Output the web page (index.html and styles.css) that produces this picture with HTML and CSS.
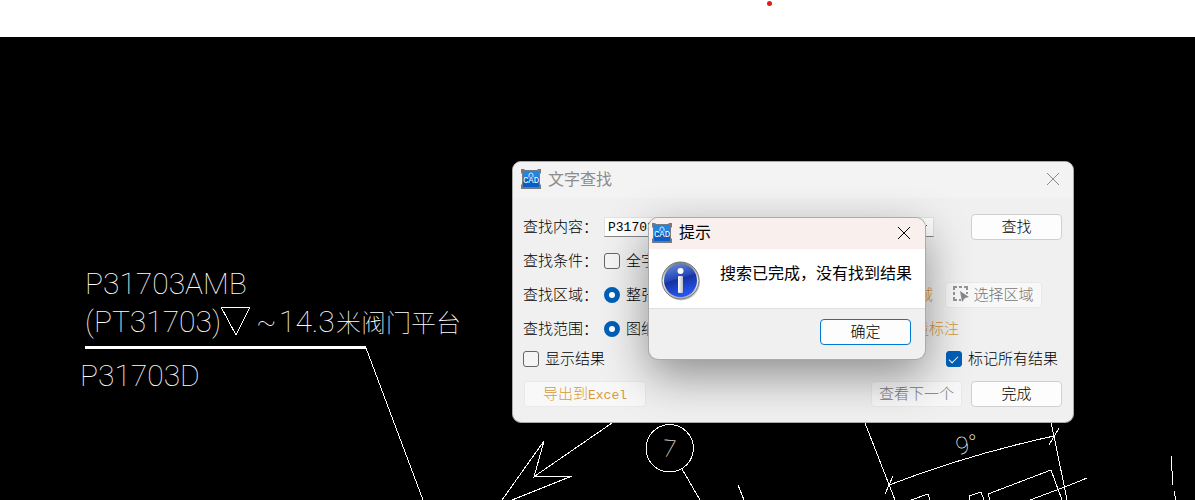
FILE: index.html
```html
<!DOCTYPE html>
<html lang="zh-CN">
<head>
    <meta charset="UTF-8">
    <meta name="viewport" content="width=device-width, initial-scale=1.0">
    <title>文字查找</title>
    <link rel="stylesheet" href="styles.css">
</head>
<body>

    <div class="top-strip">
        <span class="red-dot"></span>
    </div>

    <main class="canvas">

        <!-- CAD drawing -->
        <svg class="drawing">
            <g class="cad-text">
                <text x="85" y="257">P31703AMB</text>
                <text x="85" y="295">(PT31703)</text>
                <text x="256" y="295">~</text>
                <text x="279" y="295">14.3</text>
                <text class="cad-cn" x="336" y="295">米阀门平台</text>
                <text x="80" y="349">P31703D</text>
                <text class="cad-small" x="663" y="420" transform="rotate(5 669 411)">7</text>
                <text class="cad-small" x="956" y="417" transform="rotate(-12 962 409)">9°</text>
            </g>
            <g class="cad-lines">
                <path d="M221 270H250L236 298Z" />
                <path class="thick" d="M85 310.5H366" />
                <path d="M366 311L423 463" />
                <path d="M612 386L535 439M502 463L544 404L534 440L572 439L512 463" />
                <circle cx="669.7" cy="411.3" r="23.7" />
                <path d="M682 432L700 463M738 448L744 463" />
                <path d="M865 386L895 463M1051 386L1054 399L1067 463" />
                <path d="M889 448Q970 417 1054 399" />
                <path d="M893 439L885 457M1059 391L1049 408" />
                <path d="M911 463L928 457L930 463M970 463L969 459L981 455L984 463" />
                <path d="M990 463L988 457L1051 433L1062 463" />
                <path d="M1030 463L1070 448L1087 441" />
                <path d="M1171 419L1173 448M1174 454L1176 463" />
            </g>
        </svg>

        <!-- Search window -->
        <section class="window search-window">
            <header class="title-bar">
                <svg class="app-icon" viewBox="0 0 20 20">
                    <path d="M0 0H3L4 1H16L17 0H20V4L19 5V15L20 16V20H0V16L1 15V5L0 4Z" fill="#747a83" />
                    <rect x="2" y="2" width="16" height="16" fill="#075fc5" />
                    <path d="M2 2H18V8Q10 12 2 9Z" fill="#2385df" />
                    <path d="M8 8V6Q8 4 10 4Q12 4 12 6V8" fill="none" stroke="#d4e8f6" />
                    <text x="10" y="14" text-anchor="middle">CAD</text>
                </svg>
                <h1>文字查找</h1>
                <button class="close" aria-label="关闭">
                    <svg viewBox="0 0 12 12"><path d="M0 0L12 12M12 0L0 12" /></svg>
                </button>
            </header>

            <form class="search-form">
                <div class="row">
                    <label class="caption" for="keyword">查找内容：</label>
                    <div class="combo">
                        <input type="text" id="keyword" value="P31703">
                        <button type="button" aria-label="展开">
                            <svg viewBox="0 0 8 5"><path d="M0 0L4 4L8 0" /></svg>
                        </button>
                    </div>
                    <button type="button" class="btn push">查找</button>
                </div>
                <div class="row">
                    <span class="caption">查找条件：</span>
                    <label class="option"><input type="checkbox">全字</label>
                </div>
                <div class="row">
                    <span class="caption">查找区域：</span>
                    <label class="option"><input type="radio" name="area" checked>整张</label>
                    <span class="orange push">区域</span>
                    <button type="button" class="btn pick" disabled>
                        <svg viewBox="0 0 16 16">
                            <path d="M1 4V1H4M6 1H9M11 1H14V4M14 6V8M1 6V9M1 11V14H4M6 14H8" fill="none" stroke="#959595" stroke-width="2" />
                            <path d="M7 5L16 11L12 12L9 16Z" fill="#888" />
                        </svg>
                        选择区域
                    </button>
                </div>
                <div class="row">
                    <span class="caption">查找范围：</span>
                    <label class="option"><input type="radio" name="scope" checked>图纸</label>
                    <span class="orange push scope-end">测量标注</span>
                </div>
                <div class="row short">
                    <label class="option"><input type="checkbox">显示结果</label>
                    <label class="option push mark-all"><input type="checkbox" checked>标记所有结果</label>
                </div>
                <div class="row buttons">
                    <button type="button" class="btn export" disabled>导出到<span class="latin">Excel</span></button>
                    <button type="button" class="btn push" disabled>查看下一个</button>
                    <button type="button" class="btn">完成</button>
                </div>
            </form>
        </section>

        <!-- Message box -->
        <section class="window message-box" role="alertdialog">
            <header class="title-bar">
                <svg class="app-icon" viewBox="0 0 20 20">
                    <path d="M0 0H3L4 1H16L17 0H20V4L19 5V15L20 16V20H0V16L1 15V5L0 4Z" fill="#747a83" />
                    <rect x="2" y="2" width="16" height="16" fill="#075fc5" />
                    <path d="M2 2H18V8Q10 12 2 9Z" fill="#2385df" />
                    <path d="M8 8V6Q8 4 10 4Q12 4 12 6V8" fill="none" stroke="#d4e8f6" />
                    <text x="10" y="14" text-anchor="middle">CAD</text>
                </svg>
                <h2>提示</h2>
                <button class="close" aria-label="关闭">
                    <svg viewBox="0 0 12 12"><path d="M0 0L12 12M12 0L0 12" /></svg>
                </button>
            </header>
            <div class="message">
                <svg class="info-icon" viewBox="0 0 40 40">
                    <defs>
                        <linearGradient id="rim" x2="0" y2="1">
                            <stop offset="0" stop-color="#777" />
                            <stop offset="0.5" stop-color="#eee" />
                            <stop offset="1" stop-color="#aaa" />
                        </linearGradient>
                        <linearGradient id="blue" x2="0.3" y2="1">
                            <stop offset="0" stop-color="#6f8fdc" />
                            <stop offset="0.5" stop-color="#2448b8" />
                            <stop offset="0.55" stop-color="#1532a0" />
                            <stop offset="1" stop-color="#2454ef" />
                        </linearGradient>
                        <linearGradient id="stem">
                            <stop offset="0" stop-color="#fff" />
                            <stop offset="1" stop-color="#b9bdc8" />
                        </linearGradient>
                    </defs>
                    <circle cx="20.5" cy="21" r="18.5" fill="#999" opacity="0.5" />
                    <circle cx="19.5" cy="19.5" r="18.5" fill="url(#rim)" stroke="#777" stroke-width="1" />
                    <circle cx="19.5" cy="19.5" r="16.5" fill="url(#blue)" />
                    <circle cx="19.5" cy="10" r="3" fill="#fff" />
                    <rect x="17" y="15" width="5" height="17" rx="1" fill="url(#stem)" />
                </svg>
                <p>搜索已完成，没有找到结果</p>
            </div>
            <footer>
                <button class="btn primary">确定</button>
            </footer>
        </section>

    </main>

</body>
</html>
```
FILE: styles.css
```css
* {
    box-sizing: border-box;
}

body {
    margin: 0;
    height: 100vh;
    display: flex;
    flex-direction: column;
    overflow: hidden;
    background-color: #000;
    color: #000;
    font-family: "Noto Sans CJK SC", sans-serif;
    font-size: 15px;
    font-weight: 300;
}

.top-strip {
    position: relative;
    height: 37px;
    background-color: #fff;
}

.red-dot {
    position: absolute;
    left: 767px;
    top: 1px;
    width: 5px;
    height: 5px;
    border-radius: 50%;
    background-color: #e81818;
}

.canvas {
    position: relative;
    flex: 1;
}

/* Drawing */
.drawing {
    display: block;
    width: 100%;
    height: 100%;
}

.cad-text {
    fill: #fff;
    font-family: Roboto, "Noto Sans CJK SC", sans-serif;
    font-size: 30px;
    font-weight: 100;
}

.cad-cn {
    font-size: 25px;
}

.cad-small {
    font-size: 24px;
}

.cad-lines {
    fill: none;
    stroke: #fff;
    stroke-width: 1;
    shape-rendering: crispEdges;
}

.cad-lines .thick {
    stroke-width: 3;
}

/* Windows */
.window {
    position: absolute;
    overflow: hidden;
    background-color: #f0f0f0;
    border-radius: 9px;
}

.search-window {
    left: 512px;
    top: 124px;
    width: 562px;
    border: 1px solid #aaa;
}

.message-box {
    left: 649px;
    top: 181px;
    width: 276px;
    box-shadow: 0 0 0 1px #aaa, 0 16px 46px rgba(0, 0, 0, 0.42);
}

.title-bar {
    display: flex;
    align-items: center;
    gap: 7px;
    height: 36px;
    padding: 0 14px 2px 8px;
    background-color: #f3f3f3;
    color: #8c8c8c;
}

.message-box .title-bar {
    height: 31px;
    padding: 0 15px 2px 3px;
    background-color: #f9f0ee;
    color: #000;
}

.title-bar h1,
.title-bar h2 {
    margin: 0;
    padding-bottom: 3px;
    font-size: 16px;
    font-weight: 400;
    line-height: 24px;
}

.app-icon {
    width: 20px;
    height: 20px;
}

.app-icon text {
    fill: #fff;
    font-family: "Liberation Mono", monospace;
    font-size: 9px;
    font-weight: 400;
}

.close {
    display: flex;
    margin-left: auto;
    padding: 0;
    border: none;
    background: none;
    color: inherit;
}

.close svg {
    width: 12px;
    height: 12px;
    overflow: visible;
    fill: none;
    stroke: currentColor;
}

.search-form {
    padding: 12px 11px 15px 10px;
}

.row {
    display: flex;
    align-items: center;
    height: 34px;
}

.row.short {
    height: 26px;
}

.row.buttons {
    height: 26px;
    margin-top: 9px;
    padding-left: 1px;
    gap: 9px;
}

.push {
    margin-left: auto;
}

.caption {
    width: 81px;
    padding-bottom: 3px;
    white-space: nowrap;
}

.combo {
    display: flex;
    width: 330px;
    height: 20px;
    background-color: #fff;
    border: 1px solid #e2e2e2;
    border-bottom-color: #868686;
}

.combo input {
    flex: 1;
    min-width: 0;
    padding: 0 3px;
    border: none;
    background: none;
    font-family: "Liberation Mono", monospace;
    font-size: 13px;
}

.combo button {
    width: 18px;
    padding: 0 4px;
    border: none;
    background: none;
}

.combo svg {
    display: block;
    width: 8px;
    height: 5px;
    fill: none;
    stroke: #555;
}

.option {
    display: flex;
    align-items: center;
    gap: 6px;
    padding-bottom: 3px;
}

.option input {
    appearance: none;
    flex: none;
    width: 16px;
    height: 16px;
    margin: 3px 0 0;
    border: 1px solid #666;
    border-radius: 3px;
    background-color: #f5f5f5;
}

.option input[type="radio"]:checked {
    border: 5px solid #005fb8;
    border-radius: 50%;
    background-color: #fff;
}

.option input[type="checkbox"]:checked {
    display: flex;
    align-items: center;
    justify-content: center;
    border-color: #005fb8;
    background-color: #005fb8;
}

.option input[type="checkbox"]:checked::before {
    content: "";
    width: 8px;
    height: 4px;
    margin-bottom: 2px;
    border-left: 1px solid #fff;
    border-bottom: 1px solid #fff;
    transform: rotate(-45deg);
}

.mark-all {
    margin-right: 4px;
}

.orange {
    padding-bottom: 3px;
    color: #d69a3c;
}

.scope-end {
    margin-right: 103px;
}

.btn {
    width: 91px;
    height: 26px;
    padding: 0 0 2px;
    border: 1px solid #cfcfcf;
    border-radius: 4px;
    background-color: #fdfdfd;
    color: #000;
    font-family: inherit;
    font-size: 15px;
    font-weight: 300;
    line-height: 22px;
}

.btn:disabled {
    border-color: rgba(0, 0, 0, 0.06);
    background-color: rgba(255, 255, 255, 0.5);
    color: #777;
}

.btn.pick {
    display: flex;
    align-items: center;
    justify-content: center;
    gap: 4px;
    width: 97px;
    margin: 0 20px 0 12px;
}

.pick svg {
    width: 16px;
    height: 16px;
}

.btn.export {
    width: 122px;
    color: #d69a3c;
}

.latin {
    font-family: "Liberation Mono", monospace;
    font-size: 13px;
}

.btn.primary {
    border-color: #0078d4;
}

/* Message box */
.message {
    display: flex;
    gap: 19px;
    height: 60px;
    padding: 12px 12px 0;
    background-color: #fff;
    border-bottom: 1px solid #dfdfdf;
}

.info-icon {
    flex: none;
    width: 40px;
    height: 40px;
}

.message p {
    margin: 0;
    font-size: 16px;
    font-weight: 400;
    line-height: 22px;
    white-space: nowrap;
}

.message-box footer {
    display: flex;
    justify-content: flex-end;
    padding: 10px 14px 14px;
}
```
